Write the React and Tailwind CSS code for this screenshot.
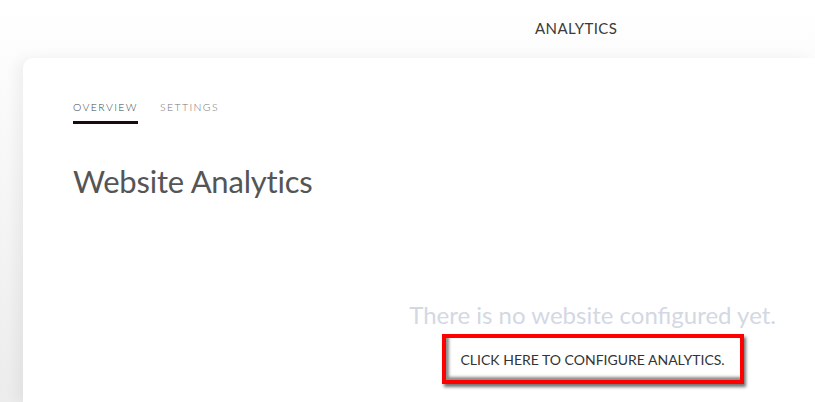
import React from 'react';

const App = () => {
  return (
    <div
      className="w-[815px] h-[402px] overflow-hidden bg-gradient-to-b from-white to-[#ececec] text-[#333]"
      style={{ fontFamily: 'Lato, "Open Sans", sans-serif' }}
    >
      {/* top bar */}
      <div className="h-[58px] flex items-start pt-[17px] pl-[535px]">
        <span className="text-[15px] tracking-[0.4px] text-[#3a3a3a]">ANALYTICS</span>
      </div>

      {/* card */}
      <div className="ml-[23px] h-[344px] bg-white rounded-tl-[10px] shadow-[-6px_0_14px_rgba(0,0,0,0.05)] pl-[50px] pr-[39px] pt-[41px]">
        <div className="flex gap-[22px] text-[10.5px] tracking-[1.4px] font-light">
          <div className="flex flex-col">
            <span className="text-[#444] leading-[16px]">OVERVIEW</span>
            <span className="mt-[6px] h-[3px] bg-[#1a0c0c]" />
          </div>
          <span className="text-[#777] leading-[16px]">SETTINGS</span>
        </div>

        <h1 className="mt-[38px] text-[31px] leading-[38px] text-[#555] tracking-[-0.2px]">Website Analytics</h1>

        <div className="mt-[100px] flex justify-end">
          <div className="flex flex-col items-center">
            <p className="text-[24px] leading-[30px] text-[#d3d8e3]">There is no website configured yet.</p>
            <button className="mt-[4px] w-[302px] h-[50px] border-[4px] border-[#f00] bg-white text-[14px] text-[#333] shadow-[2px_3px_3px_rgba(0,0,0,0.55),inset_3px_-3px_3px_rgba(0,0,0,0.45)]">
              CLICK HERE TO CONFIGURE ANALYTICS.
            </button>
          </div>
        </div>
      </div>
    </div>
  );
};

export default App;
